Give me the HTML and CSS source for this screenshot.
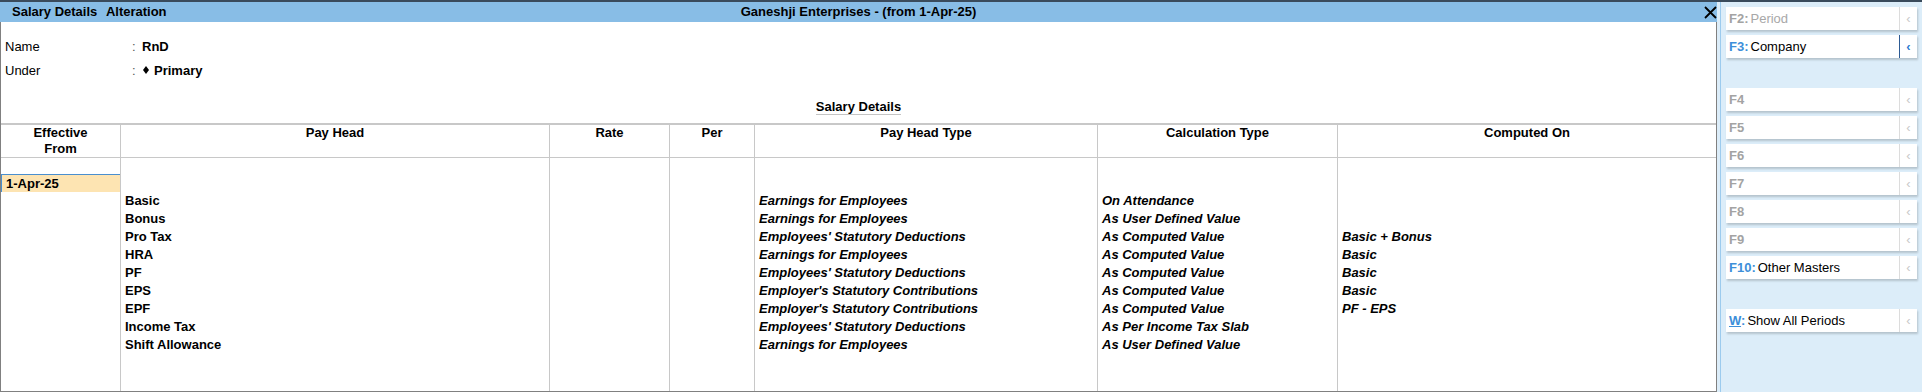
FILE: index.html
```html
<!DOCTYPE html>
<html lang="en">
<head>
    <meta charset="UTF-8">
    <title>Salary Details Alteration</title>
    <link rel="stylesheet" href="styles.css">
</head>
<body>
<div class="app">
    <div class="main">
        <div class="titlebar">
            <div class="title-left">Salary Details <span class="mode">Alteration</span></div>
            <div class="title-company">Ganeshji Enterprises - (from 1-Apr-25)</div>
            <div class="title-close">
                <svg width="13" height="13" viewBox="0 0 13 13"><path d="M1 1 L12 12 M12 1 L1 12" stroke="#000" stroke-width="1.8" fill="none"/></svg>
            </div>
        </div>

        <div class="content">
            <div class="info">
                <div class="info-row">
                    <span class="info-label">Name</span><span class="info-colon">:</span><span class="info-value">RnD</span>
                </div>
                <div class="info-row">
                    <span class="info-label">Under</span><span class="info-colon">:</span>
                    <span class="info-value"><svg class="diamond" width="6" height="8" viewBox="0 0 6 8"><path d="M3 0 L6 4 L3 8 L0 4 Z" fill="#000"/></svg>Primary</span>
                </div>
            </div>

            <div class="section-title"><span>Salary Details</span></div>

            <div class="grid">
                <div class="head first">Effective<br>From</div>
                <div class="head">Pay Head</div>
                <div class="head">Rate</div>
                <div class="head">Per</div>
                <div class="head">Pay Head Type</div>
                <div class="head">Calculation Type</div>
                <div class="head">Computed On</div>

                <div class="col first date-col">
                    <div class="date-box">1-Apr-25</div>
                </div>
                <div class="col bold">
                    <div class="line">Basic</div>
                    <div class="line">Bonus</div>
                    <div class="line">Pro Tax</div>
                    <div class="line">HRA</div>
                    <div class="line">PF</div>
                    <div class="line">EPS</div>
                    <div class="line">EPF</div>
                    <div class="line">Income Tax</div>
                    <div class="line">Shift Allowance</div>
                </div>
                <div class="col"></div>
                <div class="col"></div>
                <div class="col bold-italic">
                    <div class="line">Earnings for Employees</div>
                    <div class="line">Earnings for Employees</div>
                    <div class="line">Employees' Statutory Deductions</div>
                    <div class="line">Earnings for Employees</div>
                    <div class="line">Employees' Statutory Deductions</div>
                    <div class="line">Employer's Statutory Contributions</div>
                    <div class="line">Employer's Statutory Contributions</div>
                    <div class="line">Employees' Statutory Deductions</div>
                    <div class="line">Earnings for Employees</div>
                </div>
                <div class="col bold-italic">
                    <div class="line">On Attendance</div>
                    <div class="line">As User Defined Value</div>
                    <div class="line">As Computed Value</div>
                    <div class="line">As Computed Value</div>
                    <div class="line">As Computed Value</div>
                    <div class="line">As Computed Value</div>
                    <div class="line">As Computed Value</div>
                    <div class="line">As Per Income Tax Slab</div>
                    <div class="line">As User Defined Value</div>
                </div>
                <div class="col bold-italic">
                    <div class="line"></div>
                    <div class="line"></div>
                    <div class="line">Basic + Bonus</div>
                    <div class="line">Basic</div>
                    <div class="line">Basic</div>
                    <div class="line">Basic</div>
                    <div class="line">PF - EPS</div>
                </div>
            </div>
        </div>
    </div>

    <div class="sidebar">
        <div class="fkey disabled"><div class="fkey-text"><span class="key">F2:</span>Period</div><div class="fkey-arrow">&lsaquo;</div></div>
        <div class="fkey selected"><div class="fkey-text"><span class="key">F3:</span>Company</div><div class="fkey-arrow">&lsaquo;</div></div>
        <div class="spacer"></div>
        <div class="fkey disabled"><div class="fkey-text"><span class="key">F4</span></div><div class="fkey-arrow">&lsaquo;</div></div>
        <div class="fkey disabled"><div class="fkey-text"><span class="key">F5</span></div><div class="fkey-arrow">&lsaquo;</div></div>
        <div class="fkey disabled"><div class="fkey-text"><span class="key">F6</span></div><div class="fkey-arrow">&lsaquo;</div></div>
        <div class="fkey disabled"><div class="fkey-text"><span class="key">F7</span></div><div class="fkey-arrow">&lsaquo;</div></div>
        <div class="fkey disabled"><div class="fkey-text"><span class="key">F8</span></div><div class="fkey-arrow">&lsaquo;</div></div>
        <div class="fkey disabled"><div class="fkey-text"><span class="key">F9</span></div><div class="fkey-arrow">&lsaquo;</div></div>
        <div class="fkey"><div class="fkey-text"><span class="key">F10:</span>Other Masters</div><div class="fkey-arrow">&lsaquo;</div></div>
        <div class="spacer"></div>
        <div class="fkey"><div class="fkey-text"><span class="key"><u>W</u>:</span>Show All Periods</div><div class="fkey-arrow">&lsaquo;</div></div>
    </div>
</div>
</body>
</html>
```

FILE: styles.css
```css
body {
    margin: 0;
    font-family: "Liberation Sans", Arial, sans-serif;
    font-size: 13px;
    color: #000;
    background: #dcedf9;
}
.app {
    display: flex;
    height: 392px;
    border-top: 2px solid #3a4b5c;
    box-sizing: border-box;
}
.main {
    width: 1717px;
    display: flex;
    flex-direction: column;
    background: #fff;
}
.titlebar {
    height: 20px;
    display: grid;
    grid-template-columns: 1fr auto 1fr;
    align-items: center;
    background: #88bde6;
    font-weight: bold;
    line-height: 18px;
}
.title-left {
    padding-left: 12px;
    white-space: nowrap;
}
.mode {
    margin-left: 5px;
}
.title-close {
    justify-self: end;
    display: flex;
    margin-top: 1px;
}
.content {
    flex: 1;
    display: flex;
    flex-direction: column;
    border-left: 1px solid #808080;
    border-right: 1px solid #808080;
    border-bottom: 1px solid #808080;
    min-height: 0;
}
.info {
    padding: 13px 0 0 4px;
}
.info-row {
    display: flex;
    height: 24px;
    line-height: 24px;
}
.info-label {
    width: 127px;
}
.info-colon {
    width: 10px;
    color: #555;
}
.info-value {
    font-weight: bold;
    display: flex;
    align-items: center;
}
.diamond {
    margin: 0 5px 3px 1px;
}
.section-title {
    margin-top: 16px;
    text-align: center;
    font-weight: bold;
}
.section-title span {
    display: inline-block;
    line-height: 15px;
    border-bottom: 1px solid #c4c4c4;
}
.grid {
    margin-top: 8px;
    flex: 1;
    display: grid;
    grid-template-columns: 119px 429px 120px 85px 343px 240px 1fr;
    grid-template-rows: auto 1fr;
    border-top: 2px solid #c8c8c8;
}
.head {
    text-align: center;
    font-weight: bold;
    line-height: 16px;
    height: 32px;
    border-bottom: 1px solid #c8c8c8;
    border-left: 1px solid #c8c8c8;
}
.col {
    padding: 34px 0 0 4px;
    border-left: 1px solid #c8c8c8;
}
.head.first,
.col.first {
    border-left: none;
}
.date-col {
    padding: 16px 0 0 0;
}
.date-box {
    height: 18px;
    box-sizing: border-box;
    line-height: 17px;
    padding-left: 4px;
    background: #fde4b2;
    border-top: 1px solid #4a8fcf;
    border-left: 1px solid #4a8fcf;
    font-weight: bold;
}
.line {
    height: 18px;
    line-height: 18px;
    white-space: nowrap;
}
.bold {
    font-weight: bold;
}
.bold-italic {
    font-weight: bold;
    font-style: italic;
}
.sidebar {
    flex: 1;
    margin-left: 3px;
    border-left: 1px solid #9ccbee;
    padding: 5px 5px 0 5px;
    display: flex;
    flex-direction: column;
    gap: 5px;
}
.spacer {
    height: 20px;
}
.fkey {
    height: 23px;
    display: flex;
    background: #fff;
    box-shadow: 1px 2px 2px rgba(0, 0, 0, 0.18);
}
.fkey-text {
    flex: 1;
    padding-left: 3px;
    line-height: 23px;
    white-space: nowrap;
}
.key {
    font-weight: bold;
    color: #3d8fd9;
    margin-right: 2px;
}
.key u {
    text-decoration-color: #3d8fd9;
}
.fkey-arrow {
    width: 18px;
    box-sizing: border-box;
    border-left: 1px solid #dcdcdc;
    display: flex;
    align-items: center;
    justify-content: center;
    color: #c8c8c8;
    font-size: 13px;
}
.fkey.disabled .key {
    color: #a3a3a3;
}
.fkey.disabled .fkey-text {
    color: #a8a8a8;
}
.fkey.selected .fkey-arrow {
    border-left-color: #2d5b94;
    color: #2e7bd0;
    font-weight: bold;
}
```
